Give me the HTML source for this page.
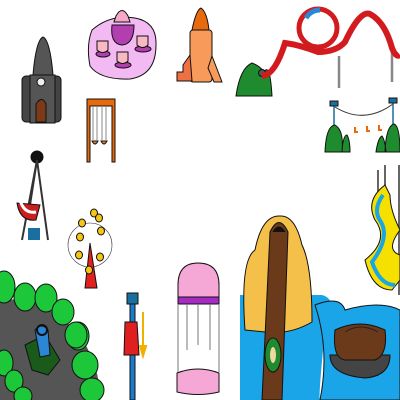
<!DOCTYPE html>
<html><head><style>body{margin:0;background:#fff}svg{display:block}</style></head><body>
<svg width="400" height="400" viewBox="0 0 400 400" xmlns="http://www.w3.org/2000/svg" stroke="#111" stroke-width="1">
<!-- gray rocket -->
<path d="M33 75 Q36 40 43 37 Q50 40 53 75Z" fill="#555"/>
<rect x="22" y="76" width="39" height="46" rx="4" fill="#444"/>
<rect x="30" y="75" width="25" height="48" fill="#555"/>
<path d="M36 122 V104 Q42 95 46 104 V122Z" fill="#7a3b16"/>
<circle cx="41" cy="82" r="4" fill="#eee"/>
<!-- teacups -->
<path d="M92 30 Q110 14 135 18 Q157 22 156 45 Q156 75 130 79 Q100 80 90 66 Q86 45 92 30Z" fill="#f3b9f2"/>
<path d="M112 25 Q110 44 122 45 Q134 44 134 25Z" fill="#b23fb0"/>
<path d="M116 16 Q122 5 128 16 L130 22 H114Z" fill="#f4a9c9"/>
<ellipse cx="103" cy="54" rx="7" ry="3" fill="#b23fb0"/><path d="M97 41 h11 v9 q-5 5 -11 0z" fill="#f9b9c4"/>
<ellipse cx="143" cy="49" rx="8" ry="3" fill="#b23fb0"/><path d="M137 36 h11 v9 q-5 5 -11 0z" fill="#f9b9c4"/>
<ellipse cx="123" cy="65" rx="8" ry="3" fill="#b23fb0"/><path d="M117 52 h11 v9 q-5 5 -11 0z" fill="#f9b9c4"/>
<!-- orange rocket -->
<path d="M192 30 Q196 10 201 8 Q207 12 209 30Z" fill="#e86a0c"/>
<rect x="190" y="30" width="22" height="52" rx="3" fill="#f79a5a"/>
<path d="M190 55 L183 65 L183 72 L177 72 L177 81 L192 81Z" fill="#ef7042"/>
<path d="M212 56 L222 82 L214 82 L208 68Z" fill="#f79a5a"/>
<!-- swing -->
<path d="M87 99 H115 V162 H112 V106 H90 V162 H87Z" fill="#e86a0c"/>
<path d="M93 106 V140 M97 106 V140 M102 106 V140 M106 106 V140" stroke="#888"/>
<path d="M92 141 q3 6 6 0z M101 141 q3 6 6 0z" fill="#f08020"/>
<!-- coaster -->
<path d="M236 96 Q240 68 252 63 Q260 66 264 72 Q270 62 272 96Z" fill="#1e8c2e"/>
<circle cx="262" cy="73" r="3.5" fill="#555"/>
<path d="M339 56 V88 M392 50 V82" stroke="#888" stroke-width="2.5"/>
<path d="M262 76 Q275 75 285 43 Q300 45 318 52 Q336 52 345 42 Q360 10 370 14 Q385 22 392 48 Q396 58 400 55" fill="none" stroke="#d21b1e" stroke-width="6"/>
<circle cx="318" cy="28" r="19" fill="none" stroke="#d21b1e" stroke-width="5"/>
<path d="M306 18 q5 -8 14 -8" stroke="#2b86d6" stroke-width="5" fill="none"/>
<!-- zipline -->
<path d="M335 107 Q364 125 393 104" fill="none" stroke="#333"/>
<path d="M334 104 V126 M393 100 V124" stroke="#1a6fa0" stroke-width="1.5"/>
<rect x="330" y="101" width="8" height="5" fill="#1a6fa0"/><rect x="389" y="98" width="8" height="5" fill="#1a6fa0"/>
<path d="M355 127 v5 h3 M367 126 v5 h3 M379 125 v5 h3" stroke="#e86a0c" stroke-width="2" fill="none"/>
<path d="M325 152 Q326 126 335 125 Q344 130 342 152Z M342 152 Q343 135 347 135 Q350 140 350 152Z" fill="#1e8c2e"/>
<path d="M376 152 Q378 138 382 136 Q385 140 386 152Z M385 152 Q386 126 394 124 Q400 126 400 152Z" fill="#1e8c2e"/>
<!-- pendulum -->
<circle cx="37" cy="157" r="6" fill="#111"/>
<path d="M37 160 L22 240 M37 160 L48 240 M37 160 L30 205" stroke="#333" stroke-width="2" fill="none"/>
<path d="M17 203 Q20 222 36 220 L40 205 Z" fill="#c9201e"/>
<path d="M20 200 Q24 214 36 212" fill="none" stroke="#fff" stroke-width="3"/>
<rect x="28" y="228" width="12" height="12" fill="#1a6fa0" stroke="none"/>
<!-- ferris wheel -->
<circle cx="90" cy="245" r="22" fill="none" stroke="#333" stroke-width=".6"/>
<path d="M85 288 L90 243 L97 288Z" fill="#e12020"/>
<g fill="#f5c518"><ellipse cx="94" cy="213" rx="3.5" ry="4"/><ellipse cx="82" cy="223" rx="3.5" ry="4"/><ellipse cx="101" cy="231" rx="3.5" ry="4"/><ellipse cx="79" cy="255" rx="3.5" ry="4"/><ellipse cx="100" cy="257" rx="3.5" ry="4"/><ellipse cx="99" cy="218" rx="3.5" ry="4"/><ellipse cx="80" cy="237" rx="3.5" ry="4"/><ellipse cx="89" cy="270" rx="3.5" ry="4"/></g>
<!-- go karts -->
<path d="M0 300 Q40 295 75 330 Q100 360 100 400 H0Z" fill="#555" stroke="none"/>
<g fill="#1dc73a"><ellipse cx="4" cy="287" rx="11" ry="16"/><ellipse cx="25" cy="297" rx="11" ry="14"/><ellipse cx="46" cy="298" rx="11" ry="14"/><ellipse cx="63" cy="312" rx="11" ry="13"/><ellipse cx="78" cy="336" rx="11" ry="14"/><ellipse cx="76" cy="335" rx="11" ry="13"/><ellipse cx="85" cy="365" rx="13" ry="14"/><ellipse cx="92" cy="390" rx="12" ry="12"/><ellipse cx="4" cy="363" rx="9" ry="13"/><ellipse cx="14" cy="381" rx="9" ry="11"/><ellipse cx="23" cy="396" rx="9" ry="9"/></g>
<path d="M25 345 L45 335 L60 360 L48 375 L32 370Z" fill="#1a5a1a"/>
<path d="M35 330 Q42 322 48 330 L50 355 L40 357Z" fill="#2b86d6"/>
<circle cx="42" cy="330" r="5" fill="none" stroke="#111" stroke-width="2"/>
<!-- drop tower -->
<rect x="130" y="300" width="5" height="100" fill="#1a7acc"/>
<rect x="127" y="293" width="11" height="11" fill="#1a6fa0"/>
<path d="M125 322 H137 L139 355 H124Z" fill="#e02020"/>
<path d="M143 312 V350 M140 346 L143 356 L146 346Z" stroke="#f0b000" stroke-width="2" fill="#f0b000"/>
<!-- carousel -->
<path d="M178 300 V285 Q178 263 198 263 Q219 263 219 285 V300Z" fill="#f5a8d6"/>
<rect x="178" y="297" width="41" height="7" fill="#a52bc4"/>
<path d="M178 304 V372 M219 304 V372 M187 304 V350 M198 304 V345 M210 304 V350" stroke="#777" fill="none"/>
<path d="M177 373 Q198 365 219 373 V392 Q198 397 177 392Z" fill="#f5a8d6"/>
<!-- log flume -->
<path d="M240 295 H322 Q340 300 325 330 Q318 400 320 400 H240Z" fill="#1aa5e8" stroke="none"/>
<path d="M315 305 Q340 295 345 310 Q380 300 400 310 V400 H320 Q330 350 315 305Z" fill="#1aa5e8"/>
<path d="M245 330 Q240 260 255 250 Q262 215 280 216 Q295 215 302 245 Q312 265 312 322 Q290 335 265 332 Z" fill="#f5c04a"/>
<path d="M270 232 Q279 213 288 232 L282 400 H262Z" fill="#6b3a1a"/>
<path d="M273 232 Q279 222 285 232" fill="#111"/>
<ellipse cx="273" cy="355" rx="8" ry="17" fill="#1e8c2e"/>
<ellipse cx="273" cy="355" rx="3" ry="8" fill="#f0d8a0" stroke="none"/>
<!-- boat -->
<path d="M330 355 Q330 375 365 378 Q390 376 390 355Z" fill="#444"/>
<path d="M335 330 Q332 358 345 360 H375 Q388 355 385 330 Q360 318 335 330Z" fill="#6b3a1a"/>
<path d="M345 332 Q360 322 378 332" fill="none" stroke="#222"/>
<!-- water slide -->
<path d="M385 165 V185 M378 170 V195 M399 165 V295" stroke="#666" stroke-width="2"/>
<path d="M385 185 Q365 200 375 220 Q390 240 365 260 Q372 290 392 290 L400 280 V255 Q385 250 400 230 Q390 210 390 195Z" fill="#f5e000"/>
<path d="M383 195 Q372 210 381 222 Q390 238 372 262 Q380 285 395 285" fill="none" stroke="#1aa5e8" stroke-width="4"/>
</svg>
</body></html>
